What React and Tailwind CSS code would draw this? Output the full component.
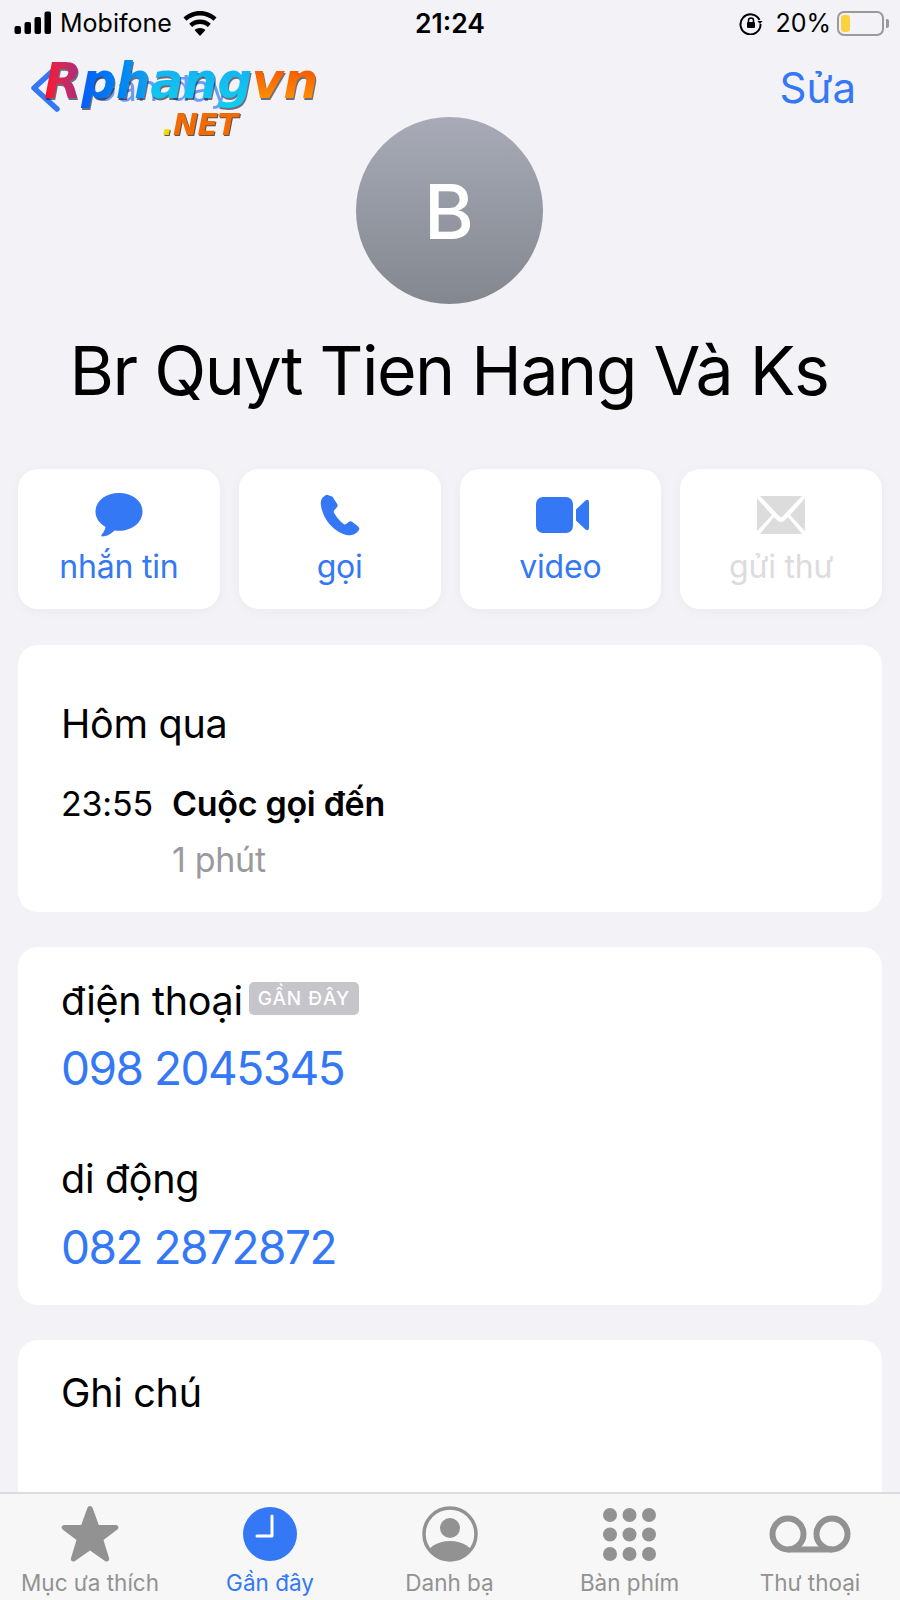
import React from 'react';

const font = { fontFamily: 'Inter, "Noto Sans", sans-serif' };

const ActionButton = ({ icon, label, disabled }) => (
    <div className="flex-1 h-[140px] bg-white rounded-[20px] shadow-[0_2px_12px_rgba(0,0,0,0.04)] flex flex-col items-center">
        <div className="h-[48px] mt-[22px] flex items-center justify-center">{icon}</div>
        <span className={`mt-[8px] text-[32px] leading-[40px] tracking-[-0.2px] ${disabled ? 'text-[#dcdcdc]' : 'text-[#3478f6]'}`}>{label}</span>
    </div>
);

const MessageIcon = () => (
    <svg width="48" height="46" viewBox="0 0 48 46"><path fill="#3478f6" d="M24 1C11 1 .5 9 .5 19.500c0 6.500 4 12 10 15.500-.5 3-2.500 6-4 8-.5 1 0 1.500 1 1.500 4 0 9-3 12-6 1.500.2 3 .3 4.500.3 13 0 23.500-8.300 23.500-19.300S37 1 24 1z" /></svg>
);

const PhoneIcon = () => (
    <svg width="40" height="42" viewBox="0 0 40 42"><path fill="#3478f6" d="M9 1.500c-1-1-2.500-1-3.500-.3C2.500 3 .5 5.500.8 10c.6 8 5 16.500 11 22.500 6 5.500 13 9 18.500 8.800 3.500-.1 6.500-2 8.500-5 .8-1.300.6-2.600-.4-3.500l-6-4.800c-1.200-1-2.500-1-3.700-.1l-2.600 2c-1 .7-2 .6-2.900-.1-2.800-2-7.500-7.500-9.200-11.200-.5-1-.3-1.900.5-2.700l2.300-2.500c1-1 1-2.300.4-3.500L13 3.500c-.5-1-2-1.500-4-2z" /></svg>
);

const VideoIcon = () => (
    <svg className="ml-[6px]" width="54" height="36" viewBox="0 0 54 36"><rect x="0" y="0" width="37" height="36" rx="7" fill="#3478f6" /><path fill="#3478f6" d="M40 12.500l9.500-9c1.500-1.300 3.500-.5 3.500 1.500v26c0 2-2 2.800-3.500 1.500l-9.500-9z" /></svg>
);

const MailIcon = () => (
    <svg width="48" height="38" viewBox="0 0 48 38" fill="#dcdcdc">
        <path d="M3 0h42L25.500 20.500c-.8.800-2.200.800-3 0z" />
        <path d="M0 2.500l15 16.500L0 35z" />
        <path d="M48 2.500L33 19l15 16z" />
        <path d="M3 38l14-17 3.500 3.500c2 2 5 2 7 0L31 21l14 17z" />
    </svg>
);

const TabItem = ({ icon, label, active, width }) => (
    <div className={`${width} flex flex-col items-center`}>
        <div className="h-[60px] flex items-center justify-center">{icon}</div>
        <span className={`mt-[6px] text-[22.500px] leading-[26px] whitespace-nowrap ${active ? 'text-[#3478f6]' : 'text-[#929292]'}`}>{label}</span>
    </div>
);

const Logo = () => (
    <div className="absolute left-[44px] top-[52px] w-[280px] h-[90px] italic font-bold select-none" style={{ fontFamily: '"DejaVu Sans", sans-serif' }}>
        <div className="text-[49px] leading-[60px] tracking-[-0.5px] whitespace-nowrap drop-shadow-[1px_2px_0_rgba(20,20,40,0.6)]">
            <span className="bg-gradient-to-r from-[#ff0a14] to-[#a8287c] bg-clip-text text-transparent">R</span>
            <span className="bg-gradient-to-r from-[#0a5cf5] to-[#14a0f0] bg-clip-text text-transparent">ph</span>
            <span className="bg-gradient-to-b from-[#18a8f0] to-[#10d0f0] bg-clip-text text-transparent">ang</span>
            <span className="bg-gradient-to-b from-[#f03000] to-[#ffa000] bg-clip-text text-transparent">vn</span>
        </div>
        <div className="absolute left-[118px] top-[56px] text-[30px] leading-[34px] tracking-[-0.5px] text-[#f56a00] drop-shadow-[1px_1px_0_rgba(20,20,20,0.7)] whitespace-nowrap">
            <span className="text-[#f5d800]">.</span>NET
        </div>
    </div>
);

export default function App() {
    return (
        <div className="relative w-[900px] h-[1600px] overflow-hidden bg-[#f2f2f7] flex flex-col text-black" style={font}>
            {/* Status bar */}
            <div className="h-[46px] flex items-center justify-between pl-[14px] pr-[11px] shrink-0">
                <div className="w-[300px] flex items-center">
                    <svg width="38" height="24" viewBox="0 0 38 24" fill="#000">
                        <rect x="0.500" y="15" width="6.500" height="8" rx="2" />
                        <rect x="10.500" y="11" width="6.500" height="12" rx="2" />
                        <rect x="20.500" y="6" width="6.500" height="17" rx="2" />
                        <rect x="30.500" y="0.500" width="6.500" height="22.500" rx="2" />
                    </svg>
                    <span className="ml-[8px] text-[25px] leading-[30px]">Mobifone</span>
                    <svg className="ml-[11px]" width="34" height="25" viewBox="0 0 34 25" fill="#000">
                        <path d="M17 0C10.500 0 5 2.500.5 6.500l3 3.300C7 6.500 11.800 4.500 17 4.500s10 2 13.500 5.300l3-3.300C29 2.500 23.500 0 17 0z" />
                        <path d="M17 8.500c-4.200 0-8 1.600-10.800 4.200l3 3.300c2-1.800 4.800-3 7.800-3s5.800 1.200 7.800 3l3-3.300C25 10.100 21.200 8.500 17 8.500z" />
                        <path d="M17 17c-2.200 0-4 .8-5.500 2l5.500 6 5.500-6c-1.500-1.200-3.300-2-5.500-2z" />
                    </svg>
                </div>
                <span className="text-[26.500px] leading-[30px] font-semibold -ml-[3px]">21:24</span>
                <div className="w-[300px] flex items-center justify-end">
                    <svg width="24" height="24" viewBox="0 0 24 24" fill="none" stroke="#000" strokeWidth="2">
                        <path d="M20.500 9A10 10 0 1 0 21.500 13" />
                        <path d="M18.500 10h5l-2.500 3z" fill="#000" stroke="none" />
                        <rect x="8" y="11" width="8" height="6" rx="1" fill="#000" stroke="none" />
                        <path d="M9.500 11V9.500a2.500 2.500 0 0 1 5 0V11" strokeWidth="1.500" />
                    </svg>
                    <span className="ml-[12px] text-[25px] leading-[30px]">20%</span>
                    <div className="ml-[6px] w-[47px] h-[25px] rounded-[7px] border-2 border-[#9a9a9c] p-[2px]">
                        <div className="w-[9px] h-full rounded-[3px] bg-[#fbd13f]" />
                    </div>
                    <div className="ml-[2px] w-[3px] h-[9px] rounded-r-[2px] bg-[#9a9a9c]" />
                </div>
            </div>

            {/* Nav */}
            <div className="mt-[9px] h-[66px] flex items-center justify-between pl-[30px] pr-[44px] shrink-0 text-[#3478f6]">
                <div className="flex items-center">
                    <svg width="30" height="52" viewBox="0 0 30 52" fill="none" stroke="#3478f6" strokeWidth="5.500" strokeLinecap="round" strokeLinejoin="round">
                        <path d="M27 5L4 26l23 21" />
                    </svg>
                    <span className="ml-[30px] text-[36px] leading-[50px] opacity-70">Gần đây</span>
                </div>
                <span className="text-[42px] leading-[50px]">Sửa</span>
            </div>

            {/* Avatar */}
            <div className="-mt-[4px] mr-[2px] self-center w-[187px] h-[187px] shrink-0 rounded-full bg-gradient-to-b from-[#a8abb7] to-[#83878f] flex items-center justify-center">
                <span className="text-white text-[76px] leading-[90px] font-medium">B</span>
            </div>

            <h1 className="mt-[24px] mr-[2px] text-center text-[68px] leading-[84px] tracking-[-1.5px] whitespace-nowrap shrink-0">Br Quyt Tien Hang Và Ks</h1>

            {/* Actions */}
            <div className="mt-[57px] mx-[18px] flex gap-[19px] shrink-0">
                <ActionButton icon={<MessageIcon />} label="nhắn tin" />
                <ActionButton icon={<PhoneIcon />} label="gọi" />
                <ActionButton icon={<VideoIcon />} label="video" />
                <ActionButton icon={<MailIcon />} label="gửi thư" disabled />
            </div>

            {/* Recent call */}
            <div className="mt-[36px] mx-[18px] h-[267px] shrink-0 bg-white rounded-[20px] pl-[43px] pt-[56px]">
                <p className="text-[39.500px] leading-[46px] tracking-[-0.3px]">Hôm qua</p>
                <div className="mt-[37px] flex">
                    <span className="w-[111px] text-[34px] leading-[40px] tracking-[-0.2px]">23:55</span>
                    <div className="flex flex-col">
                        <span className="text-[34px] leading-[40px] font-semibold tracking-[-0.3px]">Cuộc gọi đến</span>
                        <span className="mt-[16px] text-[34px] leading-[40px] text-[#9a9a9e] tracking-[-0.3px]">1 phút</span>
                    </div>
                </div>
            </div>

            {/* Phone numbers */}
            <div className="mt-[35px] mx-[18px] h-[358px] shrink-0 bg-white rounded-[20px] pl-[43px] pt-[30px]">
                <div className="flex items-start">
                    <span className="text-[39.500px] leading-[48px] tracking-[-0.3px]">điện thoại</span>
                    <span className="ml-[6px] mt-[5px] h-[33px] px-[9px] rounded-[5px] bg-[#c5c5ca] text-white text-[19px] leading-[33px] font-medium tracking-[1px]">GẦN ĐÂY</span>
                </div>
                <p className="mt-[15px] text-[46px] leading-[56px] tracking-[-1.5px] text-[#3478f6]">098 2045345</p>
                <p className="mt-[59px] text-[39.500px] leading-[48px] tracking-[-0.3px]">di động</p>
                <p className="mt-[16px] text-[46px] leading-[56px] tracking-[-1.5px] text-[#3478f6]">082 2872872</p>
            </div>

            {/* Notes */}
            <div className="mt-[35px] mx-[18px] flex-1 min-h-0 bg-white rounded-t-[20px] pl-[43px] pt-[29px]">
                <p className="text-[39.500px] leading-[48px] tracking-[-0.3px]">Ghi chú</p>
            </div>

            {/* Tab bar */}
            <div className="h-[108px] shrink-0 bg-[#f7f7f7] border-t-2 border-[#dcdcde] flex pt-[10px]">
                <TabItem
                    width="w-[180px]"
                    label="Mục ưa thích"
                    icon={<svg width="60" height="58" viewBox="0 0 60 58" fill="#929292"><path d="M30 1c1.500 0 2.300 1 2.800 2.500l6 16.500h16.700c2.800 0 4 2.800 1.800 4.500L43.500 35l5.500 18c.8 2.800-1.800 4.500-4 3L30 45.500 15 56c-2.200 1.500-4.800-.2-4-3l5.500-18L2.700 24.500C.5 22.800 1.700 20 4.500 20h16.700l6-16.500C27.700 2 28.500 1 30 1z" /></svg>}
                />
                <TabItem
                    width="w-[180px]"
                    label="Gần đây"
                    active
                    icon={
                        <svg width="54" height="54" viewBox="0 0 54 54">
                            <circle cx="27" cy="27" r="27" fill="#3478f6" />
                            <path d="M29 9v20H14" fill="none" stroke="#fff" strokeWidth="3" strokeLinecap="round" strokeLinejoin="round" />
                        </svg>
                    }
                />
                <TabItem
                    width="w-[179px]"
                    label="Danh bạ"
                    icon={
                        <svg width="56" height="56" viewBox="0 0 56 56">
                            <defs><clipPath id="contact-clip"><circle cx="28" cy="28" r="26" /></clipPath></defs>
                            <circle cx="28" cy="28" r="26" fill="none" stroke="#929292" strokeWidth="3.500" />
                            <circle cx="28" cy="22" r="10" fill="#929292" />
                            <ellipse cx="28" cy="51" rx="24" ry="16" fill="#929292" clipPath="url(#contact-clip)" />
                        </svg>
                    }
                />
                <TabItem
                    width="w-[181px]"
                    label="Bàn phím"
                    icon={
                        <svg width="53" height="53" viewBox="0 0 53 53" fill="#929292">
                            {[7, 26.5, 46].map((cy) => [7, 26.5, 46].map((cx) => <circle key={`${cx}-${cy}`} cx={cx} cy={cy} r="7" />))}
                        </svg>
                    }
                />
                <TabItem
                    width="w-[180px]"
                    label="Thư thoại"
                    icon={
                        <svg width="82" height="38" viewBox="0 0 82 38" fill="none" stroke="#929292" strokeWidth="6">
                            <circle cx="19" cy="19" r="15.500" />
                            <circle cx="63" cy="19" r="15.500" />
                            <path d="M19 34.500h44" />
                        </svg>
                    }
                />
            </div>

            <Logo />
        </div>
    );
}
